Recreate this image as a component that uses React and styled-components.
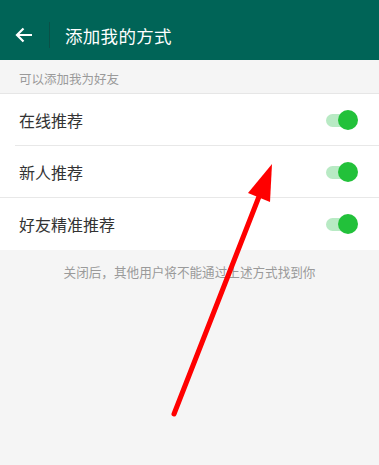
import React from "react";
import styled, { createGlobalStyle } from "styled-components";

const GlobalStyle = createGlobalStyle`
  html, body {
    margin: 0;
    padding: 0;
    background: #f5f5f5;
  }
  body {
    font-family: "Noto Sans CJK SC", "Noto Sans", sans-serif;
  }
`;

const options = ["在线推荐", "新人推荐", "好友精准推荐"];

export default function App() {
  return (
    <>
      <GlobalStyle />
      <Page>
        <Header>
          <BackButton>
            <svg width="18" height="16" viewBox="0 0 18 16">
              <path
                d="M17 8H2M8.5 1.5L2 8l6.5 6.5"
                fill="none"
                stroke="#fff"
                strokeWidth="2.2"
              />
            </svg>
          </BackButton>
          <HeaderDivider />
          <Title>添加我的方式</Title>
        </Header>
        <SectionLabel>可以添加我为好友</SectionLabel>
        <List>
          {options.map((label, i) => (
            <Row key={label} inset={i === 0}>
              <RowText>{label}</RowText>
              <Toggle>
                <Track />
                <Knob />
              </Toggle>
            </Row>
          ))}
        </List>
        <Footnote>关闭后，其他用户将不能通过上述方式找到你</Footnote>
        <Annotation width="379" height="465" viewBox="0 0 379 465">
          <line
            x1="174"
            y1="414"
            x2="260"
            y2="194"
            stroke="#ff0000"
            strokeWidth="5"
            strokeLinecap="round"
          />
          <polygon points="272,164 248,193 270,202" fill="#ff0000" />
        </Annotation>
      </Page>
    </>
  );
}

const Page = styled.div`
  position: relative;
  width: 379px;
  height: 465px;
  overflow: hidden;
  background: #f5f5f5;
`;

const Header = styled.div`
  height: 60px;
  background: #006457;
  display: flex;
  align-items: center;
  padding-top: 10px;
  box-sizing: border-box;
`;

const BackButton = styled.div`
  width: 49px;
  display: flex;
  justify-content: center;
  padding-right: 1px;
  box-sizing: border-box;
`;

const HeaderDivider = styled.div`
  width: 1px;
  height: 26px;
  background: #0a5148;
`;

const Title = styled.div`
  margin-left: 15px;
  color: #fff;
  font-size: 17.5px;
  letter-spacing: 0.3px;
`;

const SectionLabel = styled.div`
  height: 34px;
  display: flex;
  align-items: center;
  padding: 4px 0 0 19px;
  font-size: 12.5px;
  color: #9a9a9a;
  border-bottom: 1px solid #e6e6e6;
  box-sizing: border-box;
`;

const List = styled.div`
  background: #fff;
`;

const Row = styled.div`
  height: 52px;
  display: flex;
  align-items: center;
  justify-content: space-between;
  padding: 0 21px 0 19px;
  position: relative;
  &:not(:last-child)::after {
    content: "";
    position: absolute;
    bottom: 0;
    left: ${(p) => (p.inset ? "15px" : "0")};
    right: 0;
    height: 1px;
    background: #e8e8e8;
  }
`;

const RowText = styled.span`
  font-size: 16px;
  color: #333;
`;

const Toggle = styled.div`
  position: relative;
  width: 32px;
  height: 20px;
  display: flex;
  align-items: center;
`;

const Track = styled.div`
  width: 24px;
  height: 13px;
  border-radius: 7px;
  background: #b8eac4;
`;

const Knob = styled.div`
  position: absolute;
  right: 0;
  top: 0;
  width: 20px;
  height: 20px;
  border-radius: 50%;
  background: #22c13a;
`;

const Footnote = styled.div`
  text-align: center;
  margin-top: 12px;
  font-size: 12.6px;
  color: #9a9a9a;
`;

const Annotation = styled.svg`
  position: absolute;
  left: 0;
  top: 0;
  pointer-events: none;
`;
